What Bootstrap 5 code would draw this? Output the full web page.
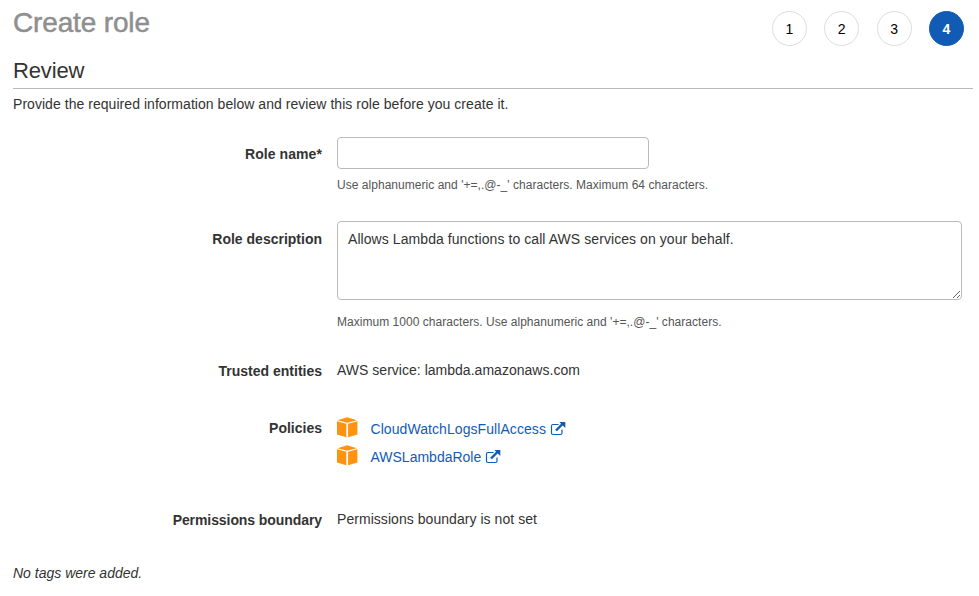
<!DOCTYPE html>
<html lang="en">
<head>
<meta charset="utf-8">
<meta name="viewport" content="width=device-width, initial-scale=1">
<title>Create role</title>
<link href="https://cdn.jsdelivr.net/npm/bootstrap@5.3.0/dist/css/bootstrap.min.css" rel="stylesheet">
<style>
body { font: 14px/20px "Liberation Sans", Arial, sans-serif; color: #333; background: #fff; overflow: hidden; }
.page { padding: 0 6px 0 13px; }
.page-head { height: 56px; }
.page-title { font-size: 28px; line-height: 32px; margin: 7px 0 0; color: #8f8f8f; font-weight: 400; -webkit-text-stroke: .5px #8f8f8f; letter-spacing: -.15px; }
.steps { gap: 17.4px; padding: 11px 9px 0 0; }
.step { width: 35px; height: 35px; border: 1px solid #ddd; color: #000; }
.step.current { background: #125bb5; border-color: #125bb5; color: #fff; font-weight: 700; }
.section-title { font-size: 22px; line-height: 26px; height: 33px; margin: 0; padding-top: 2px; border-bottom: 1px solid #bbb; font-weight: 400; letter-spacing: -.15px; }
.intro { margin: 5px 0 0; height: 43px; letter-spacing: .045px; }
.field-label { width: 309px; font-weight: 700; text-align: right; flex: none; }
.field-row { gap: 15px; }
.field-row .form-control { border: 1px solid #bbb; border-radius: 4px; color: #333; font-size: 14px; line-height: 20px; padding: 7px 10px; letter-spacing: .07px; }
.row-name { height: 84px; }
.row-name .field-label { padding-top: 7px; letter-spacing: .07px; }
.row-desc { height: 140px; }
.row-trust { height: 57px; }
.row-policy { height: 92px; }
.row-bound { height: 53px; }
.row-bound .field-label { letter-spacing: -.08px; }
.row-name .form-control { width: 312px; height: 32px; min-height: 0; }
.row-desc .form-control { width: 625px; height: 79px; min-height: 0; display: block; }
.help { font-size: 12px; line-height: 18px; color: #555; margin-top: 7px; letter-spacing: .035px; }
.row-desc .help { margin-top: 13px; }
.value { margin-top: -1px; letter-spacing: .05px; }
.row-trust .value { letter-spacing: .02px; }
.policies { margin-top: -1px; }
.policy { height: 28px; }
.policy a { color: #125bb5; text-decoration: none; margin: 2px 0 0 12.5px; letter-spacing: .07px; }
.policy .short-name { letter-spacing: 0; }
.policy svg { flex: none; }
.policy .ext { margin: 4px 0 0 4px; }
</style>
</head>
<body>
<main class="page">
  <header class="page-head d-flex justify-content-between align-items-start">
    <h1 class="page-title">Create role</h1>
    <div class="steps d-flex">
      <span class="step rounded-circle d-flex align-items-center justify-content-center">1</span>
      <span class="step rounded-circle d-flex align-items-center justify-content-center">2</span>
      <span class="step rounded-circle d-flex align-items-center justify-content-center">3</span>
      <span class="step current rounded-circle d-flex align-items-center justify-content-center">4</span>
    </div>
  </header>
  <h2 class="section-title">Review</h2>
  <p class="intro">Provide the required information below and review this role before you create it.</p>

  <div class="field-row row-name d-flex">
    <label class="field-label" for="name">Role name*</label>
    <div>
      <input class="form-control" id="name" type="text">
      <div class="help">Use alphanumeric and '+=,.@-_' characters. Maximum 64 characters.</div>
    </div>
  </div>
  <div class="field-row row-desc d-flex">
    <label class="field-label pt-2" for="desc">Role description</label>
    <div>
      <textarea class="form-control" id="desc">Allows Lambda functions to call AWS services on your behalf.</textarea>
      <div class="help">Maximum 1000 characters. Use alphanumeric and '+=,.@-_' characters.</div>
    </div>
  </div>
  <div class="field-row row-trust d-flex">
    <div class="field-label">Trusted entities</div>
    <div class="value">AWS service: lambda.amazonaws.com</div>
  </div>
  <div class="field-row row-policy d-flex">
    <div class="field-label">Policies</div>
    <div class="policies">
      <div class="policy d-flex">
        <svg width="21" height="21" viewBox="0 0 21 21" fill="#ff9310"><path d="M.6 3.2 10.2.2l9.6 3-9.6 2.5zM0 4.3l9.3 2.5v13.5L0 17.4zM20.4 4.3l-9.3 2.5v13.5l9.3-2.9z"/></svg>
        <a href="#">CloudWatchLogsFullAccess</a>
        <svg class="ext" width="16" height="16" viewBox="0 0 16 16" fill="none" stroke="#125bb5"><path d="M8.5 3.5H3Q1.5 3.5 1.5 5v7Q1.5 13.5 3 13.5h7.5q1.5 0 1.5-1.5V8.5" stroke-width="1.2"/><path d="m6 9.5 6.5-6.5" stroke-width="2.4"/><path d="M9.3 1h6v6z" fill="#125bb5" stroke="none"/></svg>
      </div>
      <div class="policy d-flex">
        <svg width="21" height="21" viewBox="0 0 21 21" fill="#ff9310"><path d="M.6 3.2 10.2.2l9.6 3-9.6 2.5zM0 4.3l9.3 2.5v13.5L0 17.4zM20.4 4.3l-9.3 2.5v13.5l9.3-2.9z"/></svg>
        <a class="short-name" href="#">AWSLambdaRole</a>
        <svg class="ext" width="16" height="16" viewBox="0 0 16 16" fill="none" stroke="#125bb5"><path d="M8.5 3.5H3Q1.5 3.5 1.5 5v7Q1.5 13.5 3 13.5h7.5q1.5 0 1.5-1.5V8.5" stroke-width="1.2"/><path d="m6 9.5 6.5-6.5" stroke-width="2.4"/><path d="M9.3 1h6v6z" fill="#125bb5" stroke="none"/></svg>
      </div>
    </div>
  </div>
  <div class="field-row row-bound d-flex">
    <div class="field-label">Permissions boundary</div>
    <div class="value">Permissions boundary is not set</div>
  </div>
  <div class="fst-italic">No tags were added.</div>
</main>
<script src="https://cdn.jsdelivr.net/npm/bootstrap@5.3.0/dist/js/bootstrap.bundle.min.js"></script>
</body>
</html>
